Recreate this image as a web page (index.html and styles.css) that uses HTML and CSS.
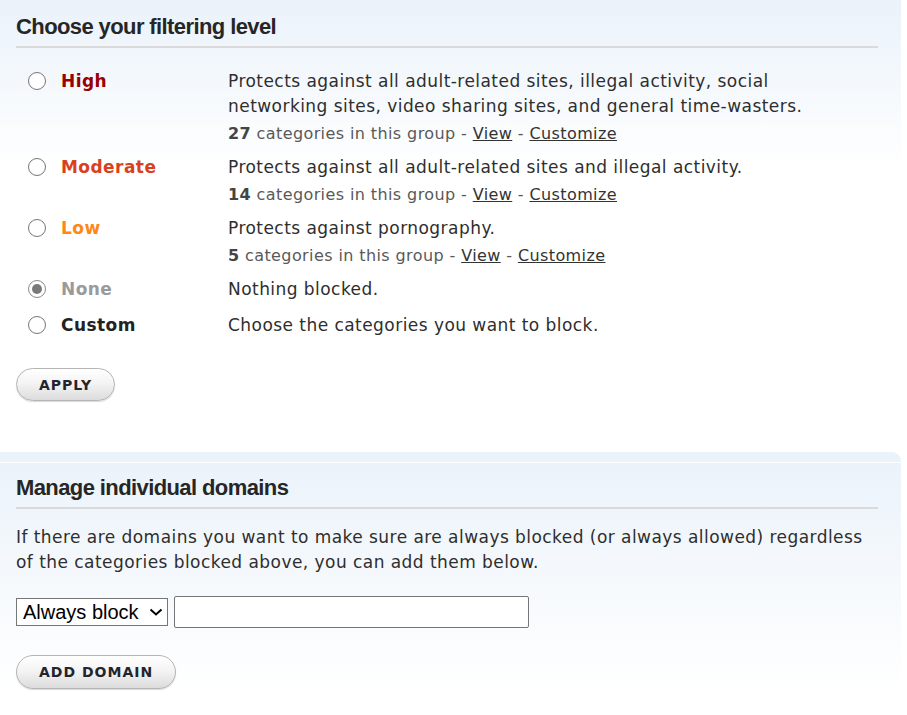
FILE: index.html
```html
<!DOCTYPE html>
<html>
<head>
<meta charset="utf-8">
<link rel="stylesheet" href="styles.css">
</head>
<body>
<div class="panel panel-top">
  <h2 class="title">Choose your filtering level</h2>
  <div class="levels">
    <div class="row">
      <span class="radio"></span>
      <span class="label high">High</span>
      <div class="desc">
        <p class="text">Protects against all adult-related sites, illegal activity, social networking sites, video sharing sites, and general time-wasters.</p>
        <p class="cats"><b>27</b> categories in this group - <a href="#">View</a> - <a href="#">Customize</a></p>
      </div>
    </div>
    <div class="row">
      <span class="radio"></span>
      <span class="label moderate">Moderate</span>
      <div class="desc">
        <p class="text">Protects against all adult-related sites and illegal activity.</p>
        <p class="cats"><b>14</b> categories in this group - <a href="#">View</a> - <a href="#">Customize</a></p>
      </div>
    </div>
    <div class="row">
      <span class="radio"></span>
      <span class="label low">Low</span>
      <div class="desc">
        <p class="text">Protects against pornography.</p>
        <p class="cats"><b>5</b> categories in this group - <a href="#">View</a> - <a href="#">Customize</a></p>
      </div>
    </div>
    <div class="row row-none">
      <span class="radio checked"></span>
      <span class="label none">None</span>
      <div class="desc">
        <p class="text">Nothing blocked.</p>
      </div>
    </div>
    <div class="row row-last">
      <span class="radio"></span>
      <span class="label custom">Custom</span>
      <div class="desc">
        <p class="text">Choose the categories you want to block.</p>
      </div>
    </div>
  </div>
  <button class="btn btn-apply">APPLY</button>
</div>
<div class="panel panel-domains">
  <div class="inner">
    <h2 class="title">Manage individual domains</h2>
    <p class="intro">If there are domains you want to make sure are always blocked (or always allowed) regardless of the categories blocked above, you can add them below.</p>
    <div class="form-row">
      <span class="sel-wrap">
        <select class="sel"><option>Always block</option><option>Always allow</option></select>
        <svg class="chev" width="14" height="8" viewBox="0 0 14 8"><path d="M1.5 1.5 L7 6.5 L12.5 1.5" fill="none" stroke="#000" stroke-width="2"/></svg>
      </span>
      <input class="domain" type="text">
    </div>
    <button class="btn btn-add">ADD DOMAIN</button>
  </div>
</div>
</body>
</html>
```
FILE: styles.css
```css
html, body {
  margin: 0;
  padding: 0;
  background: #fff;
}
body {
  width: 907px;
  font-family: "DejaVu Sans", Verdana, sans-serif;
  font-size: 17px;
  letter-spacing: 0.45px;
  color: #2e2e2e;
}
.panel {
  width: 901px;
  box-sizing: border-box;
  padding: 0 23px 0 16px;
}
.panel-top {
  padding-top: 12px;
  height: 452px;
  background: linear-gradient(#eaf2fa 0px, #ffffff 170px);
}
.title {
  margin: 0;
  font-family: "Liberation Sans", Arial, sans-serif;
  font-weight: bold;
  font-size: 22px;
  letter-spacing: -0.6px;
  line-height: 30px;
  color: #262626;
  padding-bottom: 4px;
  border-bottom: 2px solid #dadada;
}
.levels {
  margin-top: 21px;
}
.row {
  display: flex;
  align-items: flex-start;
  margin-bottom: 9px;
}
.row-none {
  margin-bottom: 11px;
}
.row-last {
  margin-bottom: 0;
}
.radio {
  flex: none;
  width: 18px;
  height: 18px;
  box-sizing: border-box;
  border: 1px solid #767676;
  border-radius: 50%;
  background: #fff;
  margin: 3px 0 0 12px;
  position: relative;
}
.radio.checked {
  border-color: #8a8a8a;
}
.radio.checked::after {
  content: "";
  position: absolute;
  left: 3px;
  top: 3px;
  width: 10px;
  height: 10px;
  border-radius: 50%;
  background: #7a7a7a;
}
.label {
  flex: none;
  width: 167px;
  margin-left: 15px;
  font-weight: bold;
  line-height: 25px;
}
.high { color: #990000; }
.moderate { color: #d9411e; }
.low { color: #ff8717; }
.none { color: #9a9a9a; }
.custom { color: #222; }
.desc {
  flex: 1;
  max-width: 600px;
}
.desc p {
  margin: 0;
  line-height: 25px;
}
.desc .cats {
  margin-top: 2px;
  font-size: 16px;
  letter-spacing: 0.4px;
  color: #595959;
}
.cats b {
  color: #444;
}
.cats a {
  color: #333;
  text-decoration: underline;
}
.btn {
  display: block;
  font-family: "DejaVu Sans", Verdana, sans-serif;
  font-weight: bold;
  font-size: 14px;
  letter-spacing: 1px;
  color: #24242e;
  padding: 0 22px;
  border: 1px solid #b4b4b4;
  border-radius: 17px;
  background: linear-gradient(#ffffff 0%, #f4f4f4 45%, #dcdcdc 100%);
  box-shadow: 0 1px 1px rgba(0,0,0,0.15);
}
.btn-apply {
  margin-top: 30px;
  height: 33px;
}
.panel-domains {
  padding: 10px 0 0 0;
  border-top-right-radius: 9px;
  background: linear-gradient(#eaf2fa 0px, #ffffff 240px);
  height: 263px;
}
.inner {
  border-top: 1px solid rgba(255,255,255,0.85);
  padding: 10px 23px 0 16px;
}
.intro {
  margin: 16px 0 0;
  line-height: 25px;
}
.form-row {
  display: flex;
  align-items: center;
  gap: 6px;
  margin-top: 21px;
}
.sel-wrap {
  position: relative;
  display: block;
  height: 28px;
}
.sel {
  display: block;
  width: 152px;
  height: 28px;
  box-sizing: border-box;
  appearance: none;
  -webkit-appearance: none;
  font-family: "Liberation Sans", Arial, sans-serif;
  font-size: 20px;
  letter-spacing: 0;
  color: #000;
  border: 1px solid #767676;
  border-radius: 0;
  background: #fff;
  padding: 0 24px 0 6px;
  margin: 0;
}
.chev {
  position: absolute;
  left: 133px;
  top: 10px;
  pointer-events: none;
}
.domain {
  width: 355px;
  height: 32px;
  box-sizing: border-box;
  border: 1px solid #767676;
  border-radius: 2px;
  background: #fff;
  margin: 0;
}
.btn-add {
  margin-top: 27px;
  height: 34px;
}
```
